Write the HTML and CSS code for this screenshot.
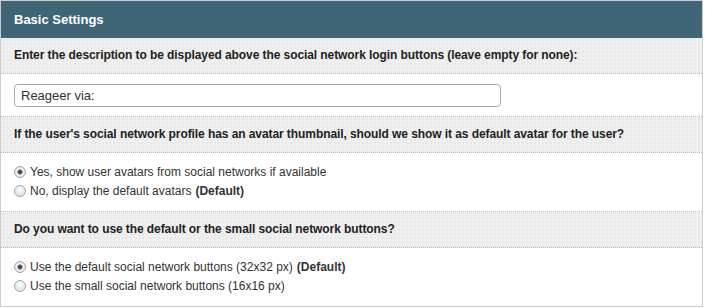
FILE: index.html
```html
<!DOCTYPE html>
<html lang="en">
  <head>
    <meta charset="UTF-8" />
    <meta name="viewport" content="width=device-width, initial-scale=1.0" />
    <title>Basic Settings</title>
    <link rel="stylesheet" href="styles.css">
  </head>
  <body>
    <div class="panel">
      <h3 class="panel-title">Basic Settings</h3>

      <div class="option">
        <div class="option-head">
          Enter the description to be displayed above the social network login buttons (leave empty for none):
        </div>
        <div class="option-body">
          <input type="text" class="text-field" value="Reageer via:" />
        </div>
      </div>

      <div class="option">
        <div class="option-head">
          If the user's social network profile has an avatar thumbnail, should we show it as default avatar for the user?
        </div>
        <div class="option-body">
          <label class="choice">
            <input type="radio" name="avatar" checked />
            Yes, show user avatars from social networks if available
          </label>
          <label class="choice">
            <input type="radio" name="avatar" />
            No, display the default avatars <strong>(Default)</strong>
          </label>
        </div>
      </div>

      <div class="option">
        <div class="option-head">
          Do you want to use the default or the small social network buttons?
        </div>
        <div class="option-body">
          <label class="choice">
            <input type="radio" name="buttons" checked />
            Use the default social network buttons (32x32 px) <strong>(Default)</strong>
          </label>
          <label class="choice">
            <input type="radio" name="buttons" />
            Use the small social network buttons (16x16 px)
          </label>
        </div>
      </div>
    </div>
  </body>
</html>
```

FILE: styles.css
```css
body {
  font-family: "Liberation Sans", Arial, sans-serif;
  margin: 0;
  background-color: #fff;
  color: #333;
}
.panel {
  width: 701px;
  border: 1px solid #ccc;
  background: white;
}
.panel-title {
  margin: 0;
  height: 37px;
  line-height: 37px;
  padding: 0 13px;
  background-color: #3f6577;
  color: white;
  font-size: 13px;
  font-weight: bold;
}
.option + .option {
  border-top: 1px dotted #bbb;
}
.option-head {
  height: 35px;
  line-height: 35px;
  padding: 0 13px;
  border-bottom: 1px dotted #bbb;
  background-color: #efefef;
  background-image: radial-gradient(#e8e8e8 1px, transparent 1px);
  background-size: 4px 4px;
  color: #222;
  font-size: 12px;
  font-weight: bold;
  letter-spacing: -0.08px;
  white-space: nowrap;
}
.option-body {
  padding: 10px 13px 9px;
}
.text-field {
  display: block;
  width: 487px;
  height: 23px;
  box-sizing: border-box;
  padding: 0 6px;
  border: 1px solid #aaa;
  border-radius: 4px;
  font-family: inherit;
  font-size: 13px;
  color: #333;
}
.option-body:has(.choice) {
  padding: 9px 13px 11px;
}
.choice {
  display: flex;
  align-items: center;
  height: 19px;
  font-size: 12px;
  color: #333;
}
.choice input {
  appearance: none;
  width: 12px;
  height: 12px;
  margin: 0 4px 0 0;
  border: 1px solid #a8a8a8;
  border-radius: 50%;
  background: radial-gradient(circle at 50% 35%, #ffffff, #d6d6d6);
  box-sizing: border-box;
}
.choice input:checked {
  background: radial-gradient(circle, #3a3a3a 0, #4a4a4a 1.5px, #888 2.3px, #f2f2f2 3px, #d6d6d6 100%);
}
.choice strong {
  margin-left: 4px;
}
```
